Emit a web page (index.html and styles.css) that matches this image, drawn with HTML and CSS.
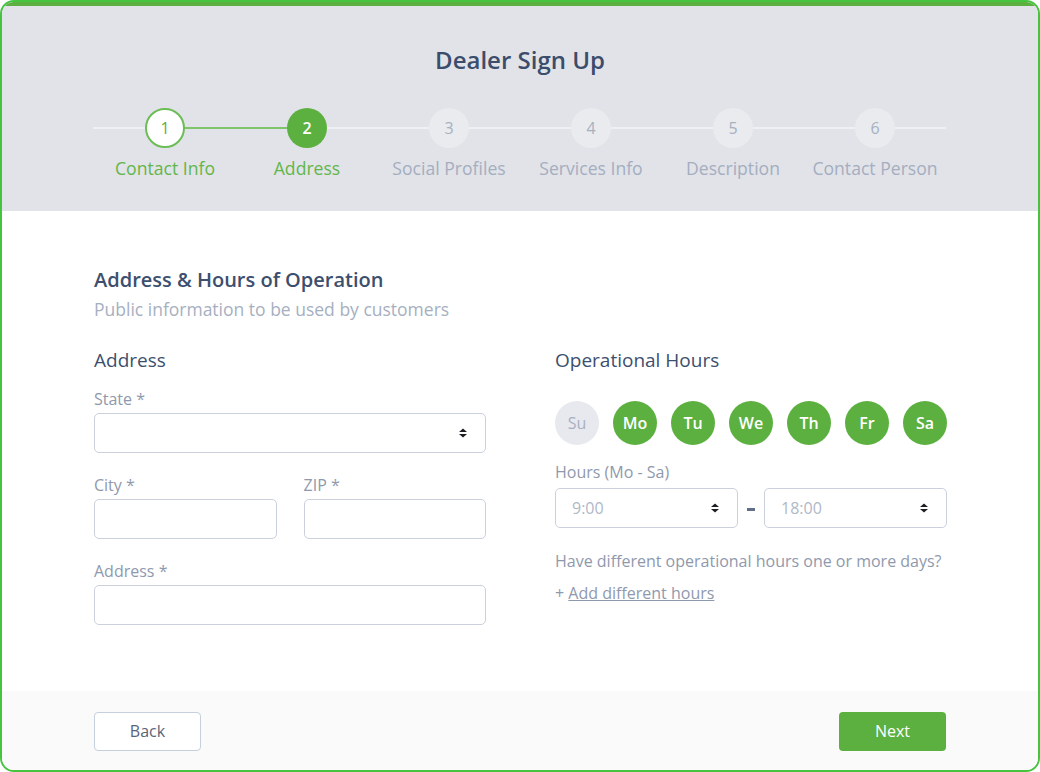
FILE: index.html
```html
<!DOCTYPE html>
<html>
<head>
    <meta http-equiv="Content-Type" content="text/html; charset=utf-8" />
    <title>Dealer Sign Up</title>
    <link rel="stylesheet" href="styles.css">
</head>
<body>
<div class="frame">
    <!--header + steps-->
    <div class="head">
        <h1>Dealer Sign Up</h1>
        <ul class="steps">
            <li class="done"><span class="num">1</span><span class="txt">Contact Info</span></li>
            <li class="cur"><span class="num">2</span><span class="txt">Address</span></li>
            <li><span class="num">3</span><span class="txt">Social Profiles</span></li>
            <li><span class="num">4</span><span class="txt">Services Info</span></li>
            <li><span class="num">5</span><span class="txt">Description</span></li>
            <li><span class="num">6</span><span class="txt">Contact Person</span></li>
        </ul>
    </div>

    <div class="main">
        <h2>Address &amp; Hours of Operation</h2>
        <p class="sub">Public information to be used by customers</p>
        <div class="cols">
            <div class="col">
                <h3>Address</h3>
                <label class="lbl">State *</label>
                <div class="field sel">
                    <span></span>
                    <svg width="10" height="10" viewBox="0 0 10 10"><path d="M1 4L5 0.5L9 4Z M1 6L5 9.5L9 6Z" fill="#1d1f24"/></svg>
                </div>
                <div class="row">
                    <div class="half">
                        <label class="lbl">City *</label>
                        <div class="field"></div>
                    </div>
                    <div class="half">
                        <label class="lbl">ZIP *</label>
                        <div class="field"></div>
                    </div>
                </div>
                <label class="lbl">Address *</label>
                <div class="field"></div>
            </div>
            <div class="col">
                <h3>Operational Hours</h3>
                <div class="days">
                    <span class="off">Su</span>
                    <span>Mo</span>
                    <span>Tu</span>
                    <span>We</span>
                    <span>Th</span>
                    <span>Fr</span>
                    <span>Sa</span>
                </div>
                <label class="lbl hours">Hours (Mo - Sa)</label>
                <div class="times">
                    <div class="field sel">
                        <span>9:00</span>
                        <svg width="10" height="10" viewBox="0 0 10 10"><path d="M1 4L5 0.5L9 4Z M1 6L5 9.5L9 6Z" fill="#1d1f24"/></svg>
                    </div>
                    <span class="dash"></span>
                    <div class="field sel">
                        <span>18:00</span>
                        <svg width="10" height="10" viewBox="0 0 10 10"><path d="M1 4L5 0.5L9 4Z M1 6L5 9.5L9 6Z" fill="#1d1f24"/></svg>
                    </div>
                </div>
                <p class="note">Have different operational hours one or more days?</p>
                <p class="add">+ <a href="javascript:;">Add different hours</a></p>
            </div>
        </div>
    </div>

    <div class="foot">
        <a href="javascript:;" class="btn back">Back</a>
        <a href="javascript:;" class="btn next">Next</a>
    </div>
</div>
</body>
</html>
```

FILE: styles.css
```css
@charset "utf-8";
html,body,h1,h2,h3,div,p,ul,li,label{padding:0; margin:0; border:0;}
ul{list-style:none;}
html,body{width:100%;height:100%;}
body{font-family:'Open Sans','Noto Sans',Arial,sans-serif;background:#fff;}

.frame{
    width:1040px;
    height:772px;
    box-sizing:border-box;
    border:2px solid #46c43f;
    border-radius:14px;
    overflow:hidden;
    display:flex;
    flex-direction:column;
}

/*head*/
.head{
    background:#e1e3e8;
    border-top:4px solid #5cb040;
    padding:38px 92px 32px 92px;
}
.head h1{
    font-size:24px;
    line-height:32px;
    font-weight:600;
    color:#3b4d6b;
    text-align:center;
}
.steps{
    display:flex;
    margin-top:32px;
    position:relative;
}
.steps:before{
    content:"";
    position:absolute;
    left:-1px;
    right:0;
    top:19px;
    height:2px;
    background:#eff0f3;
}
.steps:after{
    content:"";
    position:absolute;
    left:71px;
    width:142px;
    top:19px;
    height:2px;
    background:#7dc46b;
}
.steps li{
    width:142px;
    display:flex;
    flex-direction:column;
    align-items:center;
    position:relative;
    z-index:1;
}
.steps .num{
    width:40px;
    height:40px;
    box-sizing:border-box;
    border-radius:50%;
    background:#e9ebef;
    color:#a7b0c0;
    font-size:16px;
    display:flex;
    align-items:center;
    justify-content:center;
}
.steps .txt{
    margin-top:9px;
    font-size:17.6px;
    line-height:22px;
    color:#a4aec0;
    white-space:nowrap;
}
.steps .done .num{
    background:#fff;
    border:2px solid #6cbd55;
    color:#5cb040;
}
.steps .cur .num{
    background:#5cb040;
    color:#fff;
    font-weight:600;
}
.steps .done .txt,
.steps .cur .txt{
    color:#63b64a;
}

/*main*/
.main{
    flex:1;
    padding:55px 92px 0 92px;
}
.main h2{
    font-size:20px;
    line-height:28px;
    font-weight:600;
    color:#3d4f6e;
}
.main .sub{
    margin-top:4px;
    font-size:17.5px;
    line-height:22px;
    color:#a6b0c1;
}
.cols{
    display:flex;
    gap:69px;
    margin-top:28px;
}
.col{
    width:392px;
}
.col h3{
    font-size:19px;
    line-height:24px;
    font-weight:400;
    color:#3d4f6e;
    margin-bottom:17px;
}
.lbl{
    display:block;
    font-size:16px;
    line-height:20px;
    color:#8f99ad;
    margin-bottom:4px;
}
.field{
    height:40px;
    box-sizing:border-box;
    border:1.5px solid #cad1dc;
    border-radius:5px;
    background:#fff;
    margin-bottom:22px;
}
.sel{
    display:flex;
    align-items:center;
    justify-content:space-between;
    padding:0 17px 0 16px;
    font-size:16px;
    color:#b0b8c6;
}
.row{
    display:flex;
    gap:27px;
}
.half{
    width:183px;
}

.days{
    display:flex;
    gap:14px;
    margin-top:29px;
}
.days span{
    width:44px;
    height:44px;
    border-radius:50%;
    background:#5cb040;
    color:#fff;
    font-size:16px;
    font-weight:600;
    display:flex;
    align-items:center;
    justify-content:center;
}
.days .off{
    background:#e7e9ee;
    color:#a8b1c1;
    font-weight:400;
}
.hours{
    margin-top:17px;
    margin-bottom:6px;
}
.times{
    display:flex;
    align-items:center;
}
.times .field{
    width:184px;
    margin-bottom:0;
}
.times .dash{
    width:8px;
    height:3px;
    margin:2px 9px 0 9px;
    background:#5f6f8c;
}
.note{
    margin-top:22px;
    font-size:16px;
    line-height:22px;
    color:#8f99ad;
}
.add{
    margin-top:10px;
    font-size:16px;
    line-height:22px;
    color:#8f99ad;
}
.add a{
    color:#8f99ad;
    text-decoration:underline;
}

/*foot*/
.foot{
    height:79px;
    background:#fafafa;
    display:flex;
    justify-content:space-between;
    align-items:flex-start;
    padding:21px 92px 0 92px;
    box-sizing:border-box;
}
.btn{
    display:inline-block;
    width:107px;
    height:39px;
    line-height:39px;
    box-sizing:border-box;
    text-align:center;
    font-size:16px;
    border-radius:4px;
    text-decoration:none;
}
.back{
    background:#fff;
    border:1.5px solid #c6cfdc;
    line-height:36px;
    color:#5a6478;
}
.next{
    background:#5cb040;
    color:#fff;
}
```
